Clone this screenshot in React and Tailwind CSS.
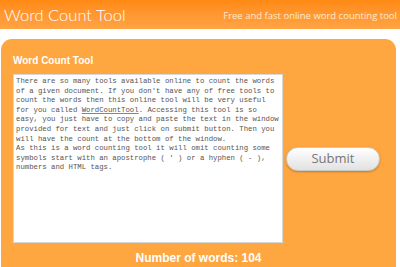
import React from 'react';

const text = `There are so many tools available online to count the words
of a given document. If you don't have any of free tools to
count the words then this online tool will be very useful
for you called WordCountTool. Accessing this tool is so
easy, you just have to copy and paste the text in the window
provided for text and just click on submit button. Then you
will have the count at the bottom of the window.
As this is a word counting tool it will omit counting some
symbols start with an apostrophe ( ' ) or a hyphen ( - ),
numbers and HTML tags.`;

export default function App() {
  const [before, after] = text.split('WordCountTool');
  return (
    <div className="w-[400px] h-[267px] overflow-hidden bg-white font-['Liberation_Sans',sans-serif]">
      {/* Header */}
      <div className="h-[29px] flex items-center justify-between pl-[4px] pr-[3px] bg-gradient-to-b from-[#ff8a12] to-[#ffa444]">
        <h1 className="text-[16.5px] leading-none font-light text-white font-['Lato',sans-serif] pt-[1px]">Word Count Tool</h1>
        <span className="text-[9.5px] text-[#ffe9cc] font-['Open_Sans',sans-serif] pt-[4px]">Free and fast online word counting tool</span>
      </div>

      {/* Panel */}
      <div className="mt-[10px] ml-[1px] w-[395px] h-[228px] bg-[#fea640] rounded-t-[11px] px-[12px] pt-[17px]">
        <h2 className="text-[10px] leading-none font-bold text-white">Word Count Tool</h2>
        <div className="flex mt-[8px]">
          <div className="w-[270px] h-[169px] bg-white border border-[#d8d8d8] px-[2px] pt-[2px]">
            <pre className="font-['Liberation_Mono',monospace] text-[7.3px] leading-[9.6px] text-[#555] whitespace-pre">
              {before}
              <span className="underline decoration-[#e06060] decoration-1 underline-offset-[1px]">WordCountTool</span>
              {after}
            </pre>
          </div>
          <div className="flex-1 flex items-center pl-[3px]">
            <button className="w-[94px] h-[24px] rounded-full bg-gradient-to-b from-white to-[#e2e2e2] border border-[#c9c9c9] shadow-[0_1px_2px_rgba(0,0,0,0.25)] text-[13px] text-[#777] font-['Open_Sans',sans-serif]">
              Submit
            </button>
          </div>
        </div>
        <div className="mt-[8px] text-center text-[12px] leading-[14px] font-bold text-white">Number of words: 104</div>
      </div>
    </div>
  );
}
